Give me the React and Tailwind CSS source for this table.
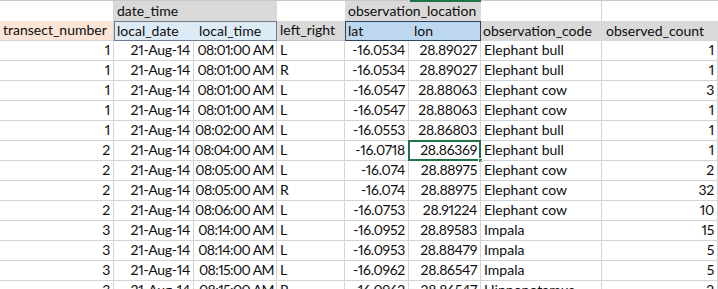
import React from "react";

const rows = [
  ["1", "21-Aug-14", "08:01:00 AM", "L", "-16.0534", "28.89027", "Elephant bull", "1"],
  ["1", "21-Aug-14", "08:01:00 AM", "R", "-16.0534", "28.89027", "Elephant bull", "1"],
  ["1", "21-Aug-14", "08:01:00 AM", "L", "-16.0547", "28.88063", "Elephant cow", "3"],
  ["1", "21-Aug-14", "08:01:00 AM", "L", "-16.0547", "28.88063", "Elephant cow", "1"],
  ["1", "21-Aug-14", "08:02:00 AM", "L", "-16.0553", "28.86803", "Elephant bull", "1"],
  ["2", "21-Aug-14", "08:04:00 AM", "L", "-16.0718", "28.86369", "Elephant bull", "1"],
  ["2", "21-Aug-14", "08:05:00 AM", "L", "-16.074", "28.88975", "Elephant cow", "2"],
  ["2", "21-Aug-14", "08:05:00 AM", "R", "-16.074", "28.88975", "Elephant cow", "32"],
  ["2", "21-Aug-14", "08:06:00 AM", "L", "-16.0753", "28.91224", "Elephant cow", "10"],
  ["3", "21-Aug-14", "08:14:00 AM", "L", "-16.0952", "28.89583", "Impala", "15"],
  ["3", "21-Aug-14", "08:14:00 AM", "L", "-16.0953", "28.88479", "Impala", "5"],
  ["3", "21-Aug-14", "08:15:00 AM", "L", "-16.0962", "28.86547", "Impala", "5"],
  ["3", "21-Aug-14", "08:15:00 AM", "R", "-16.0962", "28.86547", "Hippopotamus", "2"],
];

const cellExtra = [
  "justify-end pr-[3px] tracking-[-0.3px] proportional-nums",
  "justify-end pr-[3px] tracking-[-0.3px] proportional-nums",
  "justify-end pr-[2px] tracking-[-0.6px] proportional-nums",
  "justify-start pl-[3px]",
  "justify-end pr-[3px] tracking-[-0.3px] proportional-nums",
  "justify-end pr-[3px] tracking-[-0.3px] proportional-nums",
  "justify-start pl-[3px]",
  "justify-end pr-[3px] tracking-[-0.3px] proportional-nums",
];

export default function App() {
  return (
    <div
      className="w-[718px] h-[289px] overflow-hidden bg-white text-[#0d0d0d] text-[14px] leading-none"
      style={{ fontFamily: "Lato, 'Liberation Sans', sans-serif" }}
    >
      <div className="relative border-t border-[#c8c8c8] grid grid-cols-[114px_80px_83px_68px_64px_72px_121px_116px] auto-rows-[20px]">
        {/* green column indicator */}
        <div className="absolute left-[410px] top-[-1px] w-[71px] h-[2px] bg-[#217346]" />

        {/* row 1 */}
        <div className="border-r border-[#d4d4d4]" />
        <div className="col-span-2 bg-[#d9d9d9] flex items-end pl-[3px] pb-[3px]">date_time</div>
        <div />
        <div className="col-span-2 bg-[#d9d9d9] flex items-end pl-[3px] pb-[3px]">observation_location</div>
        <div className="border-r border-[#d4d4d4]" />
        <div />

        {/* row 2 */}
        <div className="bg-[#fce4d6] flex items-end pl-[3px] pb-[3px] border-r border-b border-[#d4d4d4]">transect_number</div>
        <div className="col-span-2 grid grid-cols-[80px_83px] bg-[#ddebf7] border border-[#6d7d8f]">
          <div className="flex items-end pl-[2px] pb-[2px]">local_date</div>
          <div className="flex items-end pl-[4px] pb-[2px]">local_time</div>
        </div>
        <div className="bg-[#d9d9d9] flex items-end pl-[3px] pb-[3px] border-b border-[#c4c4c4]">left_right</div>
        <div className="col-span-2 grid grid-cols-[64px_72px] bg-[#bdd7ee] border border-[#2c4660]">
          <div className="flex items-end pl-[2px] pb-[2px]">lat</div>
          <div className="flex items-end pl-[4px] pb-[2px]">lon</div>
        </div>
        <div className="bg-[#d9d9d9] flex items-end pl-[2px] pb-[3px]">observation_code</div>
        <div className="bg-[#d9d9d9] flex items-end pl-[4px] pb-[3px]">observed_count</div>

        {/* data */}
        {rows.map((r, i) =>
          r.map((v, j) => {
            const selected = i === 5 && j === 5;
            return (
              <div
                key={i + "-" + j}
                className={
                  "relative flex items-end pb-[3px] border-r border-b border-[#d4d4d4] whitespace-nowrap " +
                  cellExtra[j]
                }
              >
                {v}
                {selected && (
                  <>
                    <div className="absolute left-[-1px] top-[-1px] right-[-1px] bottom-[-1px] border-2 border-[#217346]" />
                    <div className="absolute right-[-3px] bottom-[-3px] w-[5px] h-[5px] bg-[#217346] border border-white" />
                  </>
                )}
              </div>
            );
          })
        )}
      </div>
    </div>
  );
}
